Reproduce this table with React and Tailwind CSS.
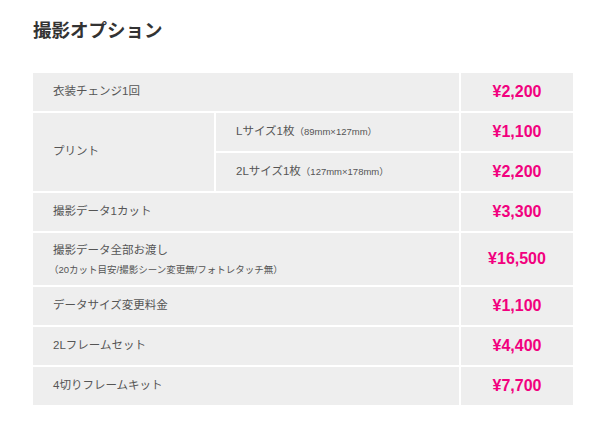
import React from "react";

const price = "flex items-center justify-center bg-[#eeeeee] text-[16px] font-bold text-[#f2007e] font-['Liberation_Sans',Arial,sans-serif]";
const label = "flex items-center bg-[#eeeeee] pl-[20px] text-[11.5px] text-[#555555]";

export default function App() {
  return (
    <div className="w-[601px] h-[444px] bg-white pl-[33px] pt-[17px] font-['Liberation_Sans','Noto_Sans_CJK_JP',sans-serif]">
      <h2 className="text-[18.5px] leading-[28px] font-bold text-[#333333]">撮影オプション</h2>
      <div className="mt-[28px] grid w-[540px] grid-cols-[181px_243px_112px] grid-rows-[38px_38px_38px_38px_52px_38px_38px_38px] gap-[2px]">
        <div className={`${label} col-span-2`}>衣装チェンジ1回</div>
        <div className={price}>¥2,200</div>

        <div className={`${label} row-span-2`}>プリント</div>
        <div className={label}>
          Lサイズ1枚<span className="text-[9.5px]">（89mm×127mm）</span>
        </div>
        <div className={price}>¥1,100</div>
        <div className={label}>
          2Lサイズ1枚<span className="text-[9.5px]">（127mm×178mm）</span>
        </div>
        <div className={price}>¥2,200</div>

        <div className={`${label} col-span-2`}>撮影データ1カット</div>
        <div className={price}>¥3,300</div>

        <div className={`${label} col-span-2 flex-col !items-start justify-center`}>
          <div className="leading-[18px]">撮影データ全部お渡し</div>
          <div className="mt-[4px] -ml-[4px] text-[9.5px] leading-[14px]">（20カット目安/撮影シーン変更無/フォトレタッチ無）</div>
        </div>
        <div className={price}>¥16,500</div>

        <div className={`${label} col-span-2`}>データサイズ変更料金</div>
        <div className={price}>¥1,100</div>

        <div className={`${label} col-span-2`}>2Lフレームセット</div>
        <div className={price}>¥4,400</div>

        <div className={`${label} col-span-2`}>4切りフレームキット</div>
        <div className={price}>¥7,700</div>
      </div>
    </div>
  );
}
